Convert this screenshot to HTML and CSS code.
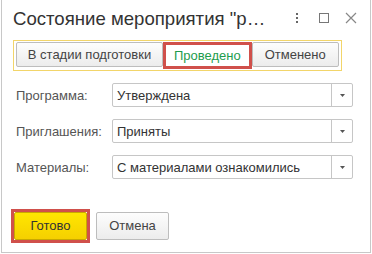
FILE: index.html
```html
<!DOCTYPE html>
<html lang="ru">
<head>
<meta charset="utf-8">
<link rel="stylesheet" href="styles.css">
</head>
<body>
<div class="window">
  <div class="titlebar">
    <div class="title">Состояние мероприятия "р…</div>
    <div class="tools">
      <svg class="ico" width="12" height="12" viewBox="0 0 12 12"><rect x="5" y="1" width="2" height="2" fill="#666"/><rect x="5" y="5" width="2" height="2" fill="#666"/><rect x="5" y="9" width="2" height="2" fill="#666"/></svg>
      <svg class="ico" width="12" height="12" viewBox="0 0 12 12"><rect x="1.5" y="1.5" width="9" height="9" fill="none" stroke="#777" stroke-width="1"/></svg>
      <svg class="ico" width="12" height="12" viewBox="0 0 12 12"><path d="M1 1L11 11M11 1L1 11" stroke="#888" stroke-width="1.2"/></svg>
    </div>
  </div>
  <div class="content">
    <div class="radiogroup">
      <div class="seg">В стадии подготовки</div>
      <div class="seg active">Проведено</div>
      <div class="seg">Отменено</div>
    </div>
    <div class="fields">
      <div class="row">
        <div class="label">Программа:</div>
        <div class="input"><span class="val">Утверждена</span><span class="drop"><svg width="5" height="3" viewBox="0 0 5 3"><path d="M0 0H5L2.5 3Z" fill="#555"/></svg></span></div>
      </div>
      <div class="row">
        <div class="label">Приглашения:</div>
        <div class="input"><span class="val">Приняты</span><span class="drop"><svg width="5" height="3" viewBox="0 0 5 3"><path d="M0 0H5L2.5 3Z" fill="#555"/></svg></span></div>
      </div>
      <div class="row">
        <div class="label">Материалы:</div>
        <div class="input"><span class="val">С материалами ознакомились</span><span class="drop"><svg width="5" height="3" viewBox="0 0 5 3"><path d="M0 0H5L2.5 3Z" fill="#555"/></svg></span></div>
      </div>
    </div>
    <div class="footer">
      <div class="hl"><div class="btn primary">Готово</div></div>
      <div class="btn">Отмена</div>
    </div>
  </div>
</div>
</body>
</html>
```
FILE: styles.css
```css
html, body { margin: 0; padding: 0; background: #fff; }
body { font-family: "Liberation Sans", Arial, sans-serif; font-size: 13px; color: #4d4d4d; }
.window {
  margin-left: 1px;
  width: 368px;
  height: 252px;
  border: 1px solid #c8c8c8;
  border-top: none;
  display: flex;
  flex-direction: column;
}
.titlebar {
  height: 38px;
  display: flex;
  align-items: center;
  padding-left: 11px;
  padding-right: 13px;
}
.title { font-size: 18.6px; color: #333; flex: 1; padding-bottom: 1px; }
.tools { display: flex; gap: 15px; align-items: center; padding-bottom: 2px; }
.ico { display: block; }
.content { padding: 2px 0 0 11px; flex: 1; display: flex; flex-direction: column; }
.radiogroup {
  align-self: flex-start;
  display: flex;
  border: 1px solid #f2d56a;
  padding: 1px 2px;
}
.seg {
  height: 23px;
  line-height: 23px;
  border: 1px solid #bdbdbd;
  border-radius: 2px;
  background: linear-gradient(#fdfdfd, #ececec);
  padding: 0 8px;
  color: #444;
}
.seg:first-child { width: 129px; text-align: center; padding: 0 8px; }
.seg.active {
  background: #fff;
  border: 3px solid #d0504b;
  height: 21px;
  line-height: 21px;
  color: #1e9c4d;
  padding: 0 8px;
  border-radius: 0;
}
.seg:last-child { width: 69px; text-align: center; }
.fields { margin-top: 12px; display: flex; flex-direction: column; gap: 12px; }
.row { display: flex; align-items: center; }
.label { width: 96px; padding-left: 3px; color: #555; }
.input {
  width: 239px;
  height: 22px;
  border: 1px solid #c6c6c6;
  border-radius: 2px;
  display: flex;
  align-items: center;
  color: #333;
}
.val { flex: 1; padding-left: 4px; }
.drop { width: 20px; height: 100%; border-left: 1px solid #c6c6c6; display: flex; align-items: center; justify-content: center; }
.drop svg { display: block; }
.footer { margin-top: auto; margin-bottom: 9px; display: flex; align-items: center; gap: 6px; margin-left: -2px; }
.hl { border: 3px solid #d0504b; }
.btn {
  width: 71px;
  height: 26px;
  line-height: 26px;
  text-align: center;
  border: 1px solid #bdbdbd;
  border-radius: 2px;
  background: linear-gradient(#fdfdfd, #ececec);
  color: #444;
}
.btn.primary {
  background: linear-gradient(#ffe600, #f5d000);
  border-color: #c9a800;
  color: #333;
}
```
